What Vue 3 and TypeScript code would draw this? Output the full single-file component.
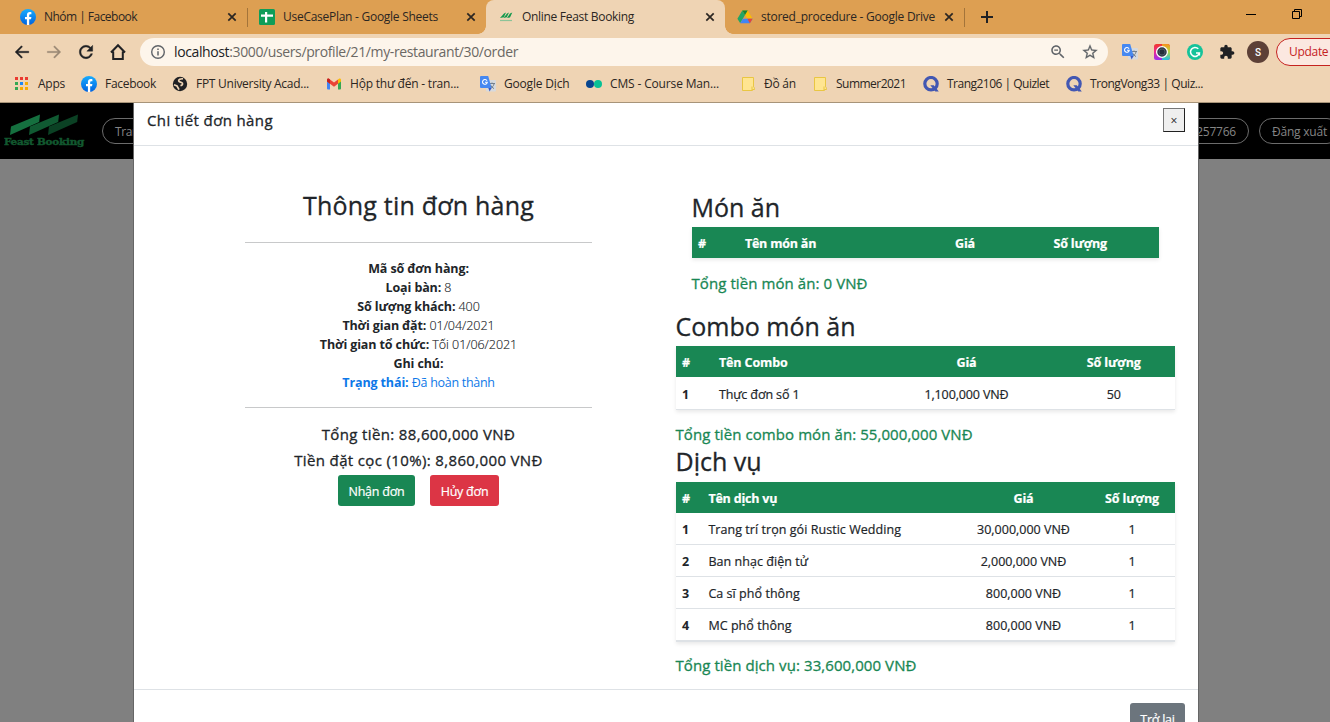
<script setup lang="ts">
interface Tab { title: string; icon: string; spacing: number; active?: boolean; divider?: boolean }
interface Bookmark { title: string; icon: string; spacing: number }
interface Row { name: string; price: string; qty: number }
interface OrderTable { id: string; heading: string; nameLabel: string; rows: Row[]; total: string }

const tabs: Tab[] = [
  { title: 'Nhóm | Facebook', icon: 'facebook', spacing: -0.53, divider: true },
  { title: 'UseCasePlan - Google Sheets', icon: 'sheets', spacing: -0.27 },
  { title: 'Online Feast Booking', icon: 'feast', spacing: -0.3, active: true },
  { title: 'stored_procedure - Google Drive', icon: 'drive', spacing: -0.25, divider: true },
]

const bookmarks: Bookmark[] = [
  { title: 'Apps', icon: 'apps', spacing: -0.25 },
  { title: 'Facebook', icon: 'facebook', spacing: -0.3 },
  { title: 'FPT University Acad...', icon: 'globe', spacing: -0.27 },
  { title: 'Hộp thư đến - tran...', icon: 'gmail', spacing: -0.21 },
  { title: 'Google Dịch', icon: 'translate', spacing: -0.18 },
  { title: 'CMS - Course Man...', icon: 'cms', spacing: -0.15 },
  { title: 'Đồ án', icon: 'folder', spacing: -0.25 },
  { title: 'Summer2021', icon: 'folder', spacing: -0.52 },
  { title: 'Trang2106 | Quizlet', icon: 'quizlet', spacing: -0.51 },
  { title: 'TrongVong33 | Quiz...', icon: 'quizlet', spacing: -0.44 },
]

const details = [
  { label: 'Mã số đơn hàng:', value: '' },
  { label: 'Loại bàn:', value: '8' },
  { label: 'Số lượng khách:', value: '400' },
  { label: 'Thời gian đặt:', value: '01/04/2021' },
  { label: 'Thời gian tổ chức:', value: 'Tối 01/06/2021' },
  { label: 'Ghi chú:', value: '' },
]

const tables: OrderTable[] = [
  { id: 'dishes', heading: 'Món ăn', nameLabel: 'Tên món ăn', rows: [], total: 'Tổng tiền món ăn: 0 VNĐ' },
  {
    id: 'combos', heading: 'Combo món ăn', nameLabel: 'Tên Combo',
    rows: [{ name: 'Thực đơn số 1', price: '1,100,000 VNĐ', qty: 50 }],
    total: 'Tổng tiền combo món ăn: 55,000,000 VNĐ',
  },
  {
    id: 'services', heading: 'Dịch vụ', nameLabel: 'Tên dịch vụ',
    rows: [
      { name: 'Trang trí trọn gói Rustic Wedding', price: '30,000,000 VNĐ', qty: 1 },
      { name: 'Ban nhạc điện tử', price: '2,000,000 VNĐ', qty: 1 },
      { name: 'Ca sĩ phổ thông', price: '800,000 VNĐ', qty: 1 },
      { name: 'MC phổ thông', price: '800,000 VNĐ', qty: 1 },
    ],
    total: 'Tổng tiền dịch vụ: 33,600,000 VNĐ',
  },
]
</script>

<template>
  <div class="screen">
    <svg class="sprite" width="0" height="0" aria-hidden="true">
      <defs>
        <linearGradient id="fbg" x1="0" y1="0" x2="0" y2="1"><stop offset="0" stop-color="#18acfe" /><stop offset="1" stop-color="#0163e0" /></linearGradient>
        <linearGradient id="lensg" x1="0" y1="0" x2="0" y2="1"><stop offset="0" stop-color="#f03a28" /><stop offset=".45" stop-color="#f0288c" /><stop offset="1" stop-color="#9b30f0" /></linearGradient>
        <linearGradient id="lensr" x1="0" y1="0" x2="0" y2="1"><stop offset="0" stop-color="#f8901c" /><stop offset=".45" stop-color="#b8d83c" /><stop offset="1" stop-color="#20c0e8" /></linearGradient>
      </defs>
      <symbol id="i-facebook" viewBox="0 0 16 16"><circle cx="8" cy="8" r="8" fill="url(#fbg)" /><path d="M11 10.300l.4-2.300H9.200V6.500c0-.7.3-1.200 1.200-1.200h1V3.200c-.5-.1-1.100-.2-1.600-.2C8 3 6.900 4 6.900 6v2H5v2.300h1.900V16h2.300v-5.700z" fill="#fff" /></symbol>
      <symbol id="i-sheets" viewBox="0 0 16 16"><rect width="16" height="16" rx="1.500" fill="#0f9d58" /><path d="M2 5.500h12v2.200H8.200V13.500H6V7.700H2zM6 3h2.200v3H6z" fill="#fff" /></symbol>
      <symbol id="i-feast" viewBox="0 0 16 16"><path d="M2 9l4-4.500 2-.9-2.200 4.600zM5.500 9l3.500-4.500 2-.9-2.200 4.600zM9 9l3-4.500 2.300-1-2.300 5z" fill="#14994e" /><path d="M2 11.500h12" stroke="#8cc398" stroke-width="1.200" /></symbol>
      <symbol id="i-drive" viewBox="0 0 16 16"><path d="M5.300 1.500h5.400L8 6.100 3.200 14.300.4 9.700z" fill="#22a565" /><path d="M5.300 1.500h5.400l4.900 8.200h-5.200z" fill="#fbbc04" /><path d="M5.300 1.500h5.400L8 6.100z" fill="#188038" /><path d="M5.800 9.700h9.800l-2.700 4.600H3.200z" fill="#4285f4" /><path d="M10.400 9.700h5.200l-2.700 4.600z" fill="#ea4335" /></symbol>
      <symbol id="i-apps" viewBox="0 0 16 16"><path d="M1 1h3v3H1zM6 1h3v3H6zM11 1h3v3h-3z" fill="#ea3a30" /><path d="M1 6h3v3H1zM1 11h3v3H1z" fill="#34a853" /><path d="M6 6h3v3H6z" fill="#1e88f5" /><path d="M11 6h3v3h-3zM6 11h3v3H6zM11 11h3v3h-3z" fill="#f9ab00" /></symbol>
      <symbol id="i-globe" viewBox="0 0 16 16"><circle cx="8" cy="8" r="7.200" fill="#202124" /><path d="M11 2.800c-2.500-.3-4.800.8-4.300 2.300.4 1.200 3 .8 3.700 2.100.6 1.300-.6 2.300-2 2.300M2 8.800l3 1.200 2 3.700" fill="none" stroke="#efd4b4" stroke-width="1.700" /></symbol>
      <symbol id="i-gmail" viewBox="0 0 16 16"><path d="M1 4l3 2.300v7.200H2a1 1 0 0 1-1-1z" fill="#4285f4" /><path d="M15 4l-3 2.300v7.200h2a1 1 0 0 0 1-1z" fill="#34a853" /><path d="M12 3.500l1-.7c.9-.6 2 0 2 1.200v1.500l-3 2.300z" fill="#fbbc04" /><path d="M1 5.500V4c0-1.200 1.100-1.800 2-1.200l5 3.800 4-3.100v4.300l-4 3-4-3z" fill="#ea4335" /><path d="M1 5.500V4c0-1.200 1.100-1.800 2-1.200l1 .8v4.200z" fill="#c5221f" /></symbol>
      <symbol id="i-translate" viewBox="0 0 16 16"><rect x="6" y="4" width="10" height="11.500" rx="1" fill="#d7dade" /><path d="M9 7.500h6M12 6.500v1M14 8c-.4 2-2 3.500-3.500 4.300M10.500 9c.7 1.500 2 2.800 3.500 3.600" stroke="#74808c" fill="none" stroke-width="1" /><path d="M1 0h7.200l3.400 12H1a1 1 0 0 1-1-1V1a1 1 0 0 1 1-1z" fill="#4688f1" /><path d="M8.300 12h3.300l-2 3.500z" fill="#3559c7" /><path d="M7 4.700A2.400 2.400 0 1 0 7.300 6.200H5" stroke="#fff" fill="none" stroke-width="1.100" /></symbol>
      <symbol id="i-cms" viewBox="0 0 16 16"><circle cx="4" cy="8" r="4" fill="#07458f" /><circle cx="12" cy="8" r="4" fill="#07c196" /></symbol>
      <symbol id="i-folder" viewBox="0 0 16 16"><path d="M2.500 1.500h11v9.300c1 .4 1 1.600 1 2.700h-2v1h-10z" fill="#ffe591" stroke="#e9c643" /><path d="M12 10.500v3.500" stroke="#e9c643" fill="none" /></symbol>
      <symbol id="i-quizlet" viewBox="0 0 16 16"><circle cx="8" cy="7.700" r="6.200" fill="none" stroke="#4257b2" stroke-width="3.200" /><path d="M7.300 9.300h3.500l5 6.300h-3.500z" fill="#4257b2" /></symbol>
      <symbol id="i-lens" viewBox="0 0 16 16"><rect width="16" height="16" rx="2.500" fill="url(#lensg)" /><path d="M8 0h5.500A2.500 2.500 0 0 1 16 2.500v11a2.500 2.500 0 0 1-2.500 2.500H8z" fill="url(#lensr)" /><circle cx="8" cy="8" r="5.400" fill="#2e3a46" stroke="#fff" stroke-width="1.300" /><circle cx="8" cy="8" r="3" fill="#24303c" stroke="#53616e" stroke-width=".8" /></symbol>
      <symbol id="i-grammar" viewBox="0 0 16 16"><circle cx="8" cy="8" r="8" fill="#15c39a" /><path d="M11.300 4.800A4.500 4.500 0 1 0 12.400 9H9M12.400 8.500v3" fill="none" stroke="#fff" stroke-width="1.500" /></symbol>
      <symbol id="i-back" viewBox="0 0 24 24"><path d="M21 11H6.800l5.900-5.900L11.200 3.600 2.800 12l8.400 8.400 1.500-1.500L6.800 13H21z" fill="currentColor" stroke="currentColor" stroke-width=".5" /></symbol>
      <symbol id="i-forward" viewBox="0 0 24 24"><path d="M3 11h14.200l-5.900-5.900 1.500-1.500 8.400 8.400-8.400 8.400-1.500-1.500 5.900-5.900H3z" fill="currentColor" stroke="currentColor" stroke-width=".3" /></symbol>
      <symbol id="i-reload" viewBox="0 0 24 24"><path d="M17.650 6.350C16.200 4.900 14.210 4 12 4c-4.420 0-7.990 3.580-7.990 8s3.570 8 7.990 8c3.730 0 6.840-2.550 7.730-6h-2.080c-.82 2.330-3.040 4-5.650 4-3.310 0-6-2.690-6-6s2.690-6 6-6c1.660 0 3.140.69 4.220 1.780L13 11h7V4l-2.350 2.350z" fill="currentColor" stroke="currentColor" stroke-width=".5" /></symbol>
      <symbol id="i-home" viewBox="0 0 18 18"><path d="M2 9.500L9 2.200l7 7.300M4.200 8.500V16h9.600V8.500" fill="none" stroke="currentColor" stroke-width="2" /></symbol>
      <symbol id="i-info" viewBox="0 0 16 16"><circle cx="8" cy="8" r="6.300" fill="none" stroke="currentColor" stroke-width="1.400" /><path d="M8 7.200v4.200M8 4.500v1.500" stroke="currentColor" stroke-width="1.500" /></symbol>
      <symbol id="i-zoom" viewBox="0 0 24 24"><path d="M15.500 14h-.79l-.28-.27C15.410 12.590 16 11.110 16 9.500 16 5.910 13.090 3 9.500 3S3 5.910 3 9.500 5.910 16 9.500 16c1.610 0 3.090-.59 4.230-1.570l.27.28v.79l5 4.990L20.490 19l-4.990-5zm-6 0C7.010 14 5 11.990 5 9.500S7.010 5 9.500 5 14 7.010 14 9.500 11.990 14 9.500 14zM7 8.700h5v1.600H7z" fill="currentColor" /></symbol>
      <symbol id="i-star" viewBox="0 0 24 24"><path d="M22 9.240l-7.190-.62L12 2 9.190 8.630 2 9.240l5.460 4.730L5.820 21 12 17.270 18.180 21l-1.630-7.030L22 9.240zM12 15.400l-3.760 2.270 1-4.280-3.320-2.880 4.380-.38L12 6.100l1.710 4.040 4.380.38-3.320 2.880 1 4.280L12 15.400z" fill="currentColor" stroke="currentColor" stroke-width=".3" /></symbol>
      <symbol id="i-puzzle" viewBox="0 0 24 24"><path d="M20.500 11H19V7c0-1.100-.9-2-2-2h-4V3.500C13 2.120 11.880 1 10.500 1S8 2.120 8 3.500V5H4c-1.100 0-1.990.9-1.990 2v3.800H3.500c1.490 0 2.700 1.210 2.700 2.700s-1.210 2.700-2.700 2.700H2V20c0 1.100.9 2 2 2h3.800v-1.500c0-1.490 1.210-2.700 2.700-2.700s2.700 1.210 2.700 2.700V22H17c1.100 0 2-.9 2-2v-4h1.500c1.380 0 2.500-1.120 2.500-2.500S21.880 11 20.500 11z" fill="currentColor" /></symbol>
      <symbol id="i-close" viewBox="0 0 10 10"><path d="M1.300 1.300l7.400 7.400M8.700 1.300L1.300 8.700" stroke="currentColor" stroke-width="1.700" /></symbol>
    </svg>

    <header class="browser">
      <div class="tabstrip">
        <div v-for="tab in tabs" :key="tab.title" class="tab" :class="{ active: tab.active, divider: tab.divider }">
          <svg class="ico"><use :href="`#i-${tab.icon}`" /></svg>
          <span class="tab-title" :style="{ letterSpacing: `${tab.spacing}px` }">{{ tab.title }}</span>
          <svg class="close"><use href="#i-close" /></svg>
        </div>
        <svg class="plus" viewBox="0 0 12 12"><path d="M6 0v12M0 6h12" stroke="#202124" stroke-width="2" /></svg>
        <div class="window-controls">
          <svg width="10" height="12" viewBox="0 0 10 12"><path d="M0 6.500h10" stroke="#000" /></svg>
          <svg width="10" height="10" viewBox="0 0 10 10"><path d="M.5 2.500h7v7h-7zM2.500 2.500v-2h7v7h-2" fill="none" stroke="#000" /></svg>
        </div>
      </div>

      <div class="toolbar">
        <svg class="nav"><use href="#i-back" /></svg>
        <svg class="nav dim"><use href="#i-forward" /></svg>
        <svg class="nav reload"><use href="#i-reload" /></svg>
        <svg class="nav"><use href="#i-home" /></svg>
        <div class="omnibox">
          <svg class="ico"><use href="#i-info" /></svg>
          <span class="url"><b>localhost</b>:3000/users/profile/21/my-restaurant/30/order</span>
          <svg class="act"><use href="#i-zoom" /></svg>
          <svg class="act star"><use href="#i-star" /></svg>
        </div>
        <div class="extensions">
          <svg class="ico"><use href="#i-translate" /></svg>
          <svg class="ico"><use href="#i-lens" /></svg>
          <svg class="ico"><use href="#i-grammar" /></svg>
          <svg class="ico"><use href="#i-puzzle" /></svg>
        </div>
        <span class="avatar">S</span>
        <span class="update">Update</span>
      </div>

      <div class="bookmarks">
        <div v-for="mark in bookmarks" :key="mark.title" class="bookmark">
          <svg class="ico"><use :href="`#i-${mark.icon}`" /></svg>
          <span :style="{ letterSpacing: `${mark.spacing}px` }">{{ mark.title }}</span>
        </div>
      </div>
    </header>

    <main class="page">
      <nav class="navbar">
        <div class="side">
          <svg class="logo" width="84" height="40" viewBox="0 0 84 40">
            <path d="M7 15.500L36 3.500l-.8 7.500L6 24z" fill="#15703f" />
            <path d="M26 15.500L55 3.500l-.8 7.500L25 24z" fill="#105a32" />
            <path d="M45 15.500L74 3.500l-.8 7.500L44 24z" fill="#0b4124" />
            <text x="0" y="34" textLength="80" lengthAdjust="spacingAndGlyphs" font-family="DejaVu Serif, serif" font-weight="700" font-size="9" fill="#12582f" stroke="#12582f" stroke-width=".4">Feast Booking</text>
          </svg>
          <span class="pill home">Trang chủ</span>
        </div>
        <div class="side right">
          <span class="pill phone">257766</span>
          <span class="pill logout">Đăng xuất</span>
        </div>
      </nav>

      <section class="modal">
        <div class="modal-header">
          <h5>Chi tiết đơn hàng</h5>
          <button class="x" type="button">×</button>
        </div>
        <div class="modal-body">
          <div class="summary">
            <h3>Thông tin đơn hàng</h3>
            <hr>
            <div class="details">
              <p v-for="item in details" :key="item.label"><b>{{ item.label }}</b><span v-if="item.value">&nbsp;{{ item.value }}</span></p>
              <p class="status"><b>Trạng thái:</b>&nbsp;<span>Đã hoàn thành</span></p>
            </div>
            <hr>
            <p class="sum">Tổng tiền: 88,600,000 VNĐ</p>
            <p class="sum deposit">Tiền đặt cọc (10%): 8,860,000 VNĐ</p>
            <div class="buttons">
              <button class="btn accept" type="button">Nhận đơn</button>
              <button class="btn reject" type="button">Hủy đơn</button>
            </div>
          </div>
          <div class="lists">
            <section v-for="table in tables" :key="table.id" class="list" :class="table.id">
              <h3>{{ table.heading }}</h3>
              <div class="table">
                <div class="row head"><span>#</span><span>{{ table.nameLabel }}</span><span>Giá</span><span>Số lượng</span></div>
                <div v-for="(row, i) in table.rows" :key="row.name" class="row">
                  <b>{{ i + 1 }}</b><span>{{ row.name }}</span><span>{{ row.price }}</span><span>{{ row.qty }}</span>
                </div>
              </div>
              <p class="total">{{ table.total }}</p>
            </section>
          </div>
        </div>
        <div class="modal-footer"><button class="btn back" type="button">Trở lại</button></div>
      </section>
    </main>
  </div>
</template>

<style>
html, body { margin: 0; overflow: hidden; }
</style>

<style scoped>
* { box-sizing: border-box; }
.screen { width: 1330px; height: 722px; overflow: hidden; display: flex; flex-direction: column; font-family: "Open Sans", "Noto Sans", sans-serif; color: #212529; }
.sprite { position: absolute; }
svg { flex: none; display: block; }
h3, h5, p { margin: 0; font-weight: 400; white-space: nowrap; }
h3, h5, .sum, .total { -webkit-text-stroke: .3px currentColor; }
button { font-family: inherit; padding: 0; }
.ico { width: 16px; height: 16px; }

.browser { height: 103px; flex: none; background: #efd4b4; border-bottom: 1px solid #a79479; color: #2b2622; font-size: 12px; white-space: nowrap; }
.tabstrip { height: 34px; background: #dd9f52; display: flex; align-items: center; padding-left: 8px; }
.tab { width: 239px; height: 34px; display: flex; align-items: center; padding: 0 10px 0 12px; position: relative; flex: none; }
.tab-title { flex: 1; margin-left: 8px; line-height: 16px; }
.tab .close { width: 10px; height: 10px; color: #2b2622; }
.tab.divider::after { content: ""; position: absolute; right: -1px; top: 8px; width: 1px; height: 19px; background: #a3743a; }
.tab.active { background: #efd4b4; border-radius: 8px 8px 0 0; }
.tab.active::before, .tab.active::after { content: ""; position: absolute; bottom: 0; width: 8px; height: 8px; }
.tab.active::before { left: -8px; background: radial-gradient(circle at 0 0, transparent 7.500px, #efd4b4 8px); }
.tab.active::after { right: -8px; background: radial-gradient(circle at 100% 0, transparent 7.500px, #efd4b4 8px); }
.plus { width: 12px; height: 12px; margin-left: 17px; }
.window-controls { margin-left: auto; display: flex; gap: 36px; align-items: center; padding: 0 28px 6px 0; }

.toolbar { height: 36px; display: flex; align-items: center; padding-left: 13px; color: #202124; }
.nav { width: 18px; height: 18px; margin-right: 14px; }
.nav.reload { width: 20px; height: 20px; margin: 0 13px 0 -1px; }
.nav.dim { color: #9b8975; }
.omnibox { width: 968px; height: 28px; border-radius: 14px; background: #fdf5eb; display: flex; align-items: center; padding: 0 9px 0 10px; margin-left: -1px; color: #5f6368; flex: none; }
.url { flex: 1; margin-left: 8px; font-size: 14px; line-height: 18px; letter-spacing: -.38px; color: #6b6864; }
.url b { font-weight: 400; color: #202124; }
.act { width: 18px; height: 18px; }
.act.star { margin-left: 14px; }
.extensions { display: flex; gap: 16.300px; margin-left: 14px; }
.avatar { width: 22px; height: 22px; border-radius: 50%; background: #5d4037; color: #fff; display: grid; place-items: center; font: 500 10px "Roboto", sans-serif; margin-left: 12.100px; flex: none; }
.update { width: 80px; height: 28px; border: 1px solid #c5221f; border-radius: 14px; background: #fbe8e0; color: #c5221f; flex: none; margin-left: 7px; padding-left: 12px; line-height: 26px; letter-spacing: -.3px; }

.bookmarks { height: 32px; display: grid; grid-template-columns: 67px 91px 154px 154px 106px 154px 72px 111px 143px 150px; padding-left: 14px; align-items: center; padding-bottom: 5px; }
.bookmark { display: flex; align-items: center; gap: 8px; }

.page { position: relative; flex: 1; background: #808080; overflow: hidden; }
.navbar { height: 56px; background: #000; display: flex; justify-content: space-between; font-size: 12px; letter-spacing: -.22px; color: #858585; }
.side { width: 134px; display: flex; align-items: center; overflow: hidden; padding-left: 4px; }
.side.right { width: 132px; padding: 0; gap: 10px; }
.logo { margin-top: -1px; }
.pill { height: 26px; border: 1px solid #6c6c6c; border-radius: 13px; line-height: 25px; padding: 0 12px; white-space: nowrap; flex: none; }
.pill.home { margin-left: 14px; width: 82px; letter-spacing: -.4px; }
.pill.phone { margin-left: -40px; width: 91px; text-align: right; }
.pill.logout { width: 81px; }

.modal { position: absolute; left: 134px; top: 0; width: 1064px; height: 640px; background: #fff; box-shadow: 0 0 0 1px #666; }
.modal-header { height: 43px; border-bottom: 1px solid #dee2e6; display: flex; justify-content: space-between; padding: 5px 13px 0; }
.modal-header h5 { font-size: 15px; letter-spacing: .38px; line-height: 24px; }
.x { width: 22px; height: 24px; border: 1px solid; border-color: #767676 #212121 #212121 #767676; background: #efefef; font-size: 12px; line-height: 24px; color: #222; }
.modal-body { height: 543px; display: flex; }
.summary { width: 347px; margin-left: 111px; padding-top: 40px; text-align: center; flex: none; }
h3 { font-size: 25px; letter-spacing: -.05px; }
.summary h3 { letter-spacing: .21px; line-height: 38px; padding-bottom: 2px; }
hr { border: 0; height: 1px; background: #c8c9ca; margin: 16px 0 15px; }
.details { margin: 16px 0 15px; }
.details + hr { margin-top: 15px; }
.details p { font-size: 12.500px; line-height: 19px; letter-spacing: -.05px; }
.details b { font-weight: 700; letter-spacing: -.12px; }
.details span { font-weight: 300; -webkit-text-stroke: .15px currentColor; }
.details .status { color: #0d78e8; }
.status span { font-weight: 400; letter-spacing: -.29px; -webkit-text-stroke: 0; }
.sum { font-size: 15px; line-height: 26px; letter-spacing: .36px; margin-top: -2px; }
.sum.deposit { margin-top: 0; }
.buttons { display: flex; justify-content: center; gap: 15px; margin-top: 2px; }
.btn { height: 31px; border: 0; border-radius: 3px; color: #fff; font-size: 12.500px; letter-spacing: -.24px; line-height: 31px; padding-top: 1px; -webkit-text-stroke: .2px currentColor; }
.accept { width: 77px; background: #198754; }
.reject { width: 69px; background: #dc3545; }

.lists { margin-left: 83.500px; padding-top: 43px; width: 499.500px; display: flex; flex-direction: column; }
.list h3 { line-height: 36px; padding-bottom: 2px; letter-spacing: 0; }
.dishes { padding: 0 16px; --cols: 47px 190px 73px 1fr; margin-bottom: 12px; }
.combos { --cols: 37px 168px 172px 1fr; margin-bottom: -3px; }
.services { --cols: 26.500px 256px 131px 1fr; }
.services h3 { line-height: 34px; padding-bottom: 4px; }
.table { box-shadow: 0 2px 4px rgba(0, 0, 0, .09); font-size: 12.500px; }
.row { display: grid; grid-template-columns: var(--cols); height: 32px; line-height: 33px; border-bottom: 1px solid #dee2e6; white-space: nowrap; }
.row > * { text-align: center; }
.row > span { -webkit-text-stroke: .2px currentColor; }
.row > :nth-child(-n+2) { text-align: left; padding-left: 6.400px; }
.row:last-child:not(.head) { height: 33px; }
.services .row:last-child { border-bottom-width: 2px; }
.services .row :nth-child(2) { letter-spacing: .05px; }
.combos .row:not(.head) { line-height: 35px; letter-spacing: -.12px; }
.row.head { height: 31px; border: 0; background: #198754; color: #fff; font-weight: 700; letter-spacing: -.1px; }
.services .row.head :nth-child(2) { letter-spacing: -.2px; }
.dishes .head { letter-spacing: -.2px; }
.total { color: #198754; font-size: 15px; letter-spacing: .08px; line-height: 26px; margin-top: 11px; }
.dishes .total { margin-top: 12px; }
.services .total { margin-top: 10px; }

.modal-footer { height: 60px; border-top: 1px solid #dee2e6; display: flex; justify-content: flex-end; padding: 13px; }
.back { width: 55px; background: #6c757d; }
</style>
